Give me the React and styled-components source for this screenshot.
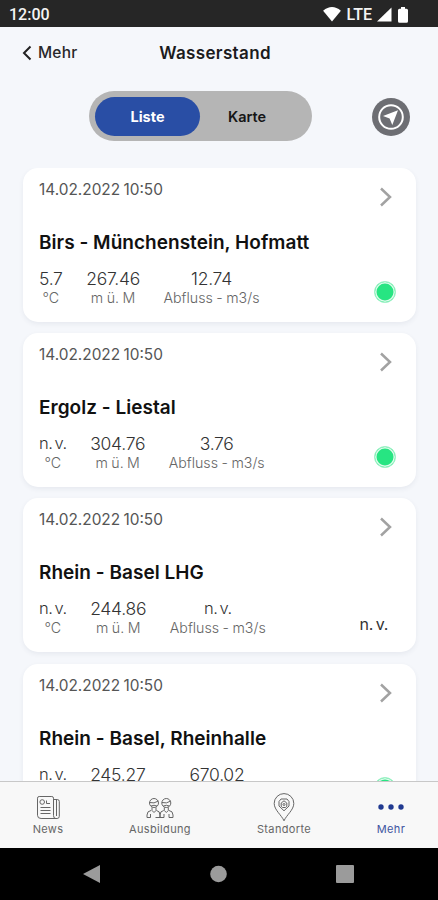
import React from "react";
import styled, { createGlobalStyle } from "styled-components";

const stations = [
  { name: "Birs - Münchenstein, Hofmatt", temp: "5.7", level: "267.46", flow: "12.74", ok: true },
  { name: "Ergolz - Liestal", temp: "n. v.", level: "304.76", flow: "3.76", ok: true },
  { name: "Rhein - Basel LHG", temp: "n. v.", level: "244.86", flow: "n. v.", ok: false },
  { name: "Rhein - Basel, Rheinhalle", temp: "n. v.", level: "245.27", flow: "670.02", ok: true },
];

function NewsIcon() {
  return (
    <svg width="25" height="25" viewBox="0 0 25 25">
      <path d="M17.5 4.5h3.8q2 0 2 2v14.8q0 2.2-2.2 2.2h-16q-3.6 0-3.6-3.2V3.2q0-1.7 1.7-1.7h12.6q1.7 0 1.7 1.7v17.3q0 3 2.3 3M20.500 5v16" />
      <circle cx="6.2" cy="7" r="2.3" />
      <path d="M10.5 5.5v3H14M4.500 12.500h10M4.500 15.500h10M4.500 18.500h10" />
    </svg>
  );
}

function PeopleIcon() {
  return (
    <svg width="28" height="25" viewBox="0 0 28 25">
      <circle cx="8" cy="8" r="4.5" />
      <path d="M3.6 7.5q4.4 1.5 8.8-1.5M5 11q3-1.5 6 0M6 12.3v3.2l2 2 2-2v-3.2" />
      <circle cx="20.3" cy="8" r="4.5" />
      <path d="M16 7.5q4.4 1.5 8.8-1.5M17.3 11q3-1.5 6 0M18.3 12.3v3.2l2 2 2-2v-3.2" />
      <path d="M5 15.5q-4 .5-4 4.500v2.500h3.500V19M10.500 15.500q3.500.5 3.500 4.500v2.500H9.500M17.700 15.500q-3.700.5-3.700 4.500v2.500h4V19M23 15.500q4 .5 4 4.500v2.500h-4V19" />
    </svg>
  );
}

function PinIcon() {
  return (
    <svg width="22" height="29" viewBox="0 0 22 29">
      <path d="M11 27.8C8.5 22 1.2 17 1.2 10.4a9.8 9.8 0 0 1 19.6 0C20.8 17 13.5 22 11 27.8z" />
      <path d="M8 6h6l2 2.5V13l-5 4.8L6 13V8.5z" />
      <path d="m11 7.8 2.8 2.2v3.2l-1.300 1.300h-3l-1.300-1.300V10z" />
      <circle cx="11" cy="11.5" r="1" />
    </svg>
  );
}

function DotsIcon() {
  return (
    <svg width="28" height="8" viewBox="0 0 28 8">
      <g fill="#213a91" stroke="none">
        <circle cx="4" cy="4" r="2.7" />
        <circle cx="14" cy="4" r="2.7" />
        <circle cx="24" cy="4" r="2.7" />
      </g>
    </svg>
  );
}

function Measurement({ value, unit }) {
  return (
    <Value $missing={value === "n. v."}>
      <strong>{value}</strong>
      <span>{unit}</span>
    </Value>
  );
}

function App() {
  return (
    <Screen>
      <GlobalStyle />
      <StatusBar>
        <span>12:00</span>
        <StatusIcons>
          <svg width="18" height="15" viewBox="0 0 19 16">
            <path d="M0 4Q9.5-4 19 4L9.5 15.5z" />
          </svg>
          <span>LTE</span>
          <svg width="15" height="15" viewBox="0 0 15 15">
            <path d="M14.5.5v14H0z" />
          </svg>
          <svg width="10" height="16" viewBox="0 0 10 16">
            <path d="M3 0h4v1.8h1.500q1.500 0 1.500 1.500v11q0 1.500-1.500 1.500h-7Q0 15.800 0 14.300v-11q0-1.500 1.500-1.500H3z" />
          </svg>
        </StatusIcons>
      </StatusBar>

      <Header>
        <BackButton>
          <svg width="10" height="16" viewBox="0 0 10 16">
            <path d="M8.5 1.5 2 8l6.5 6.5" />
          </svg>
          Mehr
        </BackButton>
        <h1>Wasserstand</h1>
      </Header>

      <Toolbar>
        <Switch>
          <SwitchItem $active>Liste</SwitchItem>
          <SwitchItem>Karte</SwitchItem>
        </Switch>
        <LocateButton>
          <svg width="38" height="38" viewBox="0 0 38 38">
            <circle cx="19" cy="19" r="11.8" fill="none" stroke="#fff" strokeWidth="2" />
            <path d="M26 12.2 20.3 27l-2.700-6.400-6.600-2.500z" fill="#fff" />
          </svg>
        </LocateButton>
      </Toolbar>

      <List>
        {stations.map((station) => (
          <Card key={station.name}>
            <DateText>14.02.2022 10:50</DateText>
            <Chevron width="13" height="20" viewBox="0 0 13 20">
              <path d="m2 1.5 9 8.500-9 8.500" />
            </Chevron>
            <h2>{station.name}</h2>
            <Values>
              <Measurement value={station.temp} unit="°C" />
              <Measurement value={station.level} unit="m ü. M" />
              <Measurement value={station.flow} unit="Abfluss - m3/s" />
            </Values>
            {station.ok ? <StatusDot /> : <NoStatus>n. v.</NoStatus>}
          </Card>
        ))}
      </List>

      <TabBar>
        <Tab $width={96}>
          <i><NewsIcon /></i>
          <span>News</span>
        </Tab>
        <Tab $width={128}>
          <i><PeopleIcon /></i>
          <span>Ausbildung</span>
        </Tab>
        <Tab $width={120}>
          <i><PinIcon /></i>
          <span>Standorte</span>
        </Tab>
        <Tab $width={94} $active>
          <i><DotsIcon /></i>
          <span>Mehr</span>
        </Tab>
      </TabBar>

      <SystemNav>
        <svg width="17" height="20" viewBox="0 0 17 20">
          <path d="M17 1v18L0 10z" />
        </svg>
        <svg width="18" height="20" viewBox="0 0 18 20">
          <circle cx="9.5" cy="10" r="8.3" />
        </svg>
        <svg width="18" height="20" viewBox="0 0 18 20">
          <rect y="1" width="18" height="18" rx="1" />
        </svg>
      </SystemNav>
    </Screen>
  );
}

const GlobalStyle = createGlobalStyle`
  * {
    box-sizing: border-box;
    margin: 0;
    padding: 0;
  }
  body {
    font-family: Inter, sans-serif;
    background: #f5f7fb;
  }
  svg {
    display: block;
    flex-shrink: 0;
  }
`;

const Screen = styled.div`
  width: 438px;
  height: 900px;
  display: flex;
  flex-direction: column;
  overflow: hidden;
  background: #f5f7fb;
`;

const StatusBar = styled.div`
  height: 27px;
  flex-shrink: 0;
  display: flex;
  align-items: center;
  justify-content: space-between;
  padding: 2px 30px 0 9px;
  background: #262626;
  color: #f4f4f4;
  font: 500 16px/20px Roboto, sans-serif;
`;

const StatusIcons = styled.div`
  display: flex;
  align-items: center;
  gap: 6px;
  svg {
    fill: #fff;
  }
  span {
    margin-right: -1px;
  }
`;

const Header = styled.header`
  height: 51px;
  flex-shrink: 0;
  display: grid;
  grid-template-columns: 1fr auto 1fr;
  align-items: center;
  padding: 0 30px 0 22px;
  h1 {
    color: #1b1b1d;
    font-size: 17px;
    font-weight: 600;
    letter-spacing: 0.35px;
  }
`;

const BackButton = styled.button`
  display: flex;
  align-items: center;
  gap: 6px;
  border: 0;
  background: none;
  color: #28282a;
  font: 500 15.5px Inter, sans-serif;
  letter-spacing: 0.2px;
  svg {
    fill: none;
    stroke: #222;
    stroke-width: 2;
  }
`;

const Toolbar = styled.div`
  height: 90px;
  flex-shrink: 0;
  display: flex;
  align-items: flex-start;
  justify-content: space-between;
  padding: 13px 28px 0 89px;
`;

const Switch = styled.div`
  width: 223px;
  height: 50px;
  display: flex;
  padding: 6px;
  border-radius: 25px;
  background: #b5b5b5;
`;

const SwitchItem = styled.button`
  width: ${({ $active }) => ($active ? 105 : 94)}px;
  height: 39px;
  border: 0;
  border-radius: 20px;
  background: ${({ $active }) => ($active ? "#294ea5" : "transparent")};
  color: ${({ $active }) => ($active ? "#fff" : "#161616")};
  font: ${({ $active }) => ($active ? 700 : 600)} 14.5px Inter, sans-serif;
`;

const LocateButton = styled.button`
  width: 38px;
  height: 38px;
  margin-top: 7px;
  border: 0;
  border-radius: 50%;
  background: #6d6e73;
`;

const List = styled.main`
  flex: 1;
  min-height: 0;
  overflow: hidden;
  display: flex;
  flex-direction: column;
  gap: 11.7px;
  padding: 0 22px 0 23px;
`;

const Card = styled.article`
  height: 153.5px;
  flex-shrink: 0;
  display: grid;
  grid-template-columns: 1fr auto;
  grid-template-rows: 58px 36px 1fr;
  padding: 0 20px 0 16px;
  border-radius: 15px;
  background: #fff;
  box-shadow: 0 2px 5px rgba(40, 50, 80, 0.07);
  h2 {
    grid-column: 1 / -1;
    color: #111;
    font-size: 19px;
    line-height: 34px;
    font-weight: 600;
    letter-spacing: 0.03px;
    white-space: nowrap;
  }
`;

const DateText = styled.time`
  padding-top: 12px;
  color: #555;
  font-size: 15.4px;
  line-height: 20px;
  word-spacing: -1px;
`;

const Chevron = styled.svg`
  justify-self: end;
  margin: 19px 4px 0 0;
  fill: none;
  stroke: #a2a2a2;
  stroke-width: 2.5;
`;

const Values = styled.div`
  display: flex;
  gap: 23.5px;
  padding-top: 6px;
`;

const Value = styled.div`
  display: flex;
  flex-direction: column;
  align-items: center;
  white-space: nowrap;
  strong {
    color: #333;
    font-size: ${({ $missing }) => ($missing ? 16.5 : 17.5)}px;
    line-height: 21px;
    font-weight: 300;
    letter-spacing: ${({ $missing }) => ($missing ? -0.5 : -0.25)}px;
    word-spacing: -2px;
  }
  span {
    color: #666;
    font-size: 14.2px;
    line-height: 18px;
    font-weight: 300;
    word-spacing: -0.5px;
  }
`;

const StatusDot = styled.div`
  width: 22px;
  height: 22px;
  margin-top: 19px;
  border: 1px solid #a1f2c8;
  border-radius: 50%;
  background: #27e582;
  box-shadow: inset 0 0 0 1.5px #dcfbea;
`;

const NoStatus = styled.div`
  margin: 22px 8px 0 0;
  color: #333;
  font-size: 16px;
  line-height: 20px;
  font-weight: 400;
  letter-spacing: -0.3px;
  word-spacing: -1.5px;
`;

const TabBar = styled.nav`
  height: 67px;
  flex-shrink: 0;
  display: flex;
  border-top: 1px solid #c8c8c8;
  background: #f8f8f8;
`;

const Tab = styled.div`
  width: ${({ $width }) => $width}px;
  display: flex;
  flex-direction: column;
  align-items: center;
  color: ${({ $active }) => ($active ? "#4055a0" : "#666")};
  i {
    height: 38px;
    display: flex;
    align-items: center;
    margin-top: 6px;
  }
  svg {
    fill: none;
    stroke: #666;
    stroke-width: 1;
  }
  span {
    margin-top: -5px;
    font-size: 11px;
    line-height: 16px;
    font-weight: 400;
    letter-spacing: 0.35px;
  }
`;

const SystemNav = styled.div`
  height: 52px;
  flex-shrink: 0;
  display: flex;
  align-items: center;
  justify-content: space-between;
  padding: 0 84px 0 83px;
  background: #000;
  svg {
    fill: #9b9b9b;
  }
`;

export default App;
